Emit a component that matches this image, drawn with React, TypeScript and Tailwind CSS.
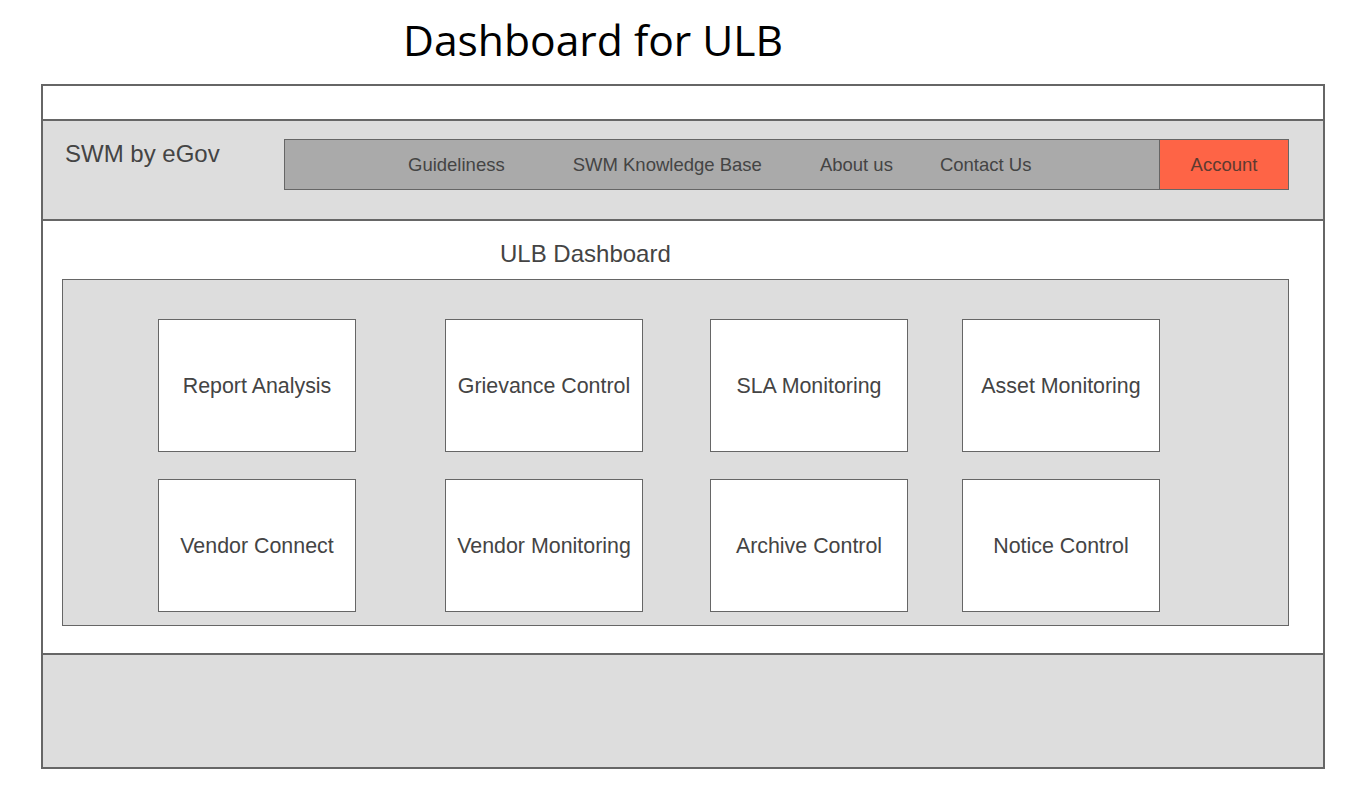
import React from "react";

const sans = { fontFamily: '"Liberation Sans", Arial, sans-serif' };

function Card({ label, className = "" }: { label: string; className?: string }) {
  return (
    <div
      className={`w-[198px] h-[133px] shrink-0 bg-white border border-[#666] flex items-center justify-center pt-[2px] text-[21.4px] text-[#444] box-border ${className}`}
    >
      {label}
    </div>
  );
}

export default function App() {
  return (
    <div className="w-[1365px] h-[800px] bg-white" style={sans}>
      <div
        className="h-[84px] flex items-center pb-[5px] pl-[403px] text-[42.6px] text-black box-border"
        style={{ fontFamily: '"Open Sans", sans-serif' }}
      >
        Dashboard for ULB
      </div>
      <div className="ml-[41px] w-[1284px] h-[685px] border-2 border-[#666] flex flex-col box-border">
        <div className="h-[33px]" />
        <div className="h-[102px] border-y-2 border-[#666] bg-[#dddddd] flex items-start box-border">
          <div className="pl-[22px] pt-[19px] text-[24px] leading-[28px] text-[#444] w-[241px]">SWM by eGov</div>
          <div className="mt-[18px] flex h-[51px]">
            <div className="w-[876px] h-full bg-[#aaaaaa] border border-[#666] flex items-center text-[18.5px] text-[#444] box-border">
              <span className="ml-[123px]">Guideliness</span>
              <span className="ml-[68px]">SWM Knowledge Base</span>
              <span className="ml-[58px]">About us</span>
              <span className="ml-[47px]">Contact Us</span>
            </div>
            <div className="w-[129px] h-full bg-[#fe6446] border border-[#666] border-l-0 flex items-center justify-center text-[18.5px] text-[#5e3a30] box-border">
              Account
            </div>
          </div>
        </div>
        <div className="h-[432px] flex flex-col">
          <div className="pt-[19px] leading-[28px] text-[24px] text-[#444] pl-[457px]">ULB Dashboard</div>
          <div className="mt-[11px] ml-[19px] w-[1227px] h-[347px] bg-[#dddddd] border border-[#666] box-border pt-[39px] flex flex-col gap-[27px]">
            <div className="flex">
              <Card label="Report Analysis" className="ml-[95px]" />
              <Card label="Grievance Control" className="ml-[89px]" />
              <Card label="SLA Monitoring" className="ml-[67px]" />
              <Card label="Asset Monitoring" className="ml-[54px]" />
            </div>
            <div className="flex">
              <Card label="Vendor Connect" className="ml-[95px]" />
              <Card label="Vendor Monitoring" className="ml-[89px]" />
              <Card label="Archive Control" className="ml-[67px]" />
              <Card label="Notice Control" className="ml-[54px]" />
            </div>
          </div>
        </div>
        <div className="flex-1 border-t-2 border-[#666] bg-[#dddddd]" />
      </div>
    </div>
  );
}
